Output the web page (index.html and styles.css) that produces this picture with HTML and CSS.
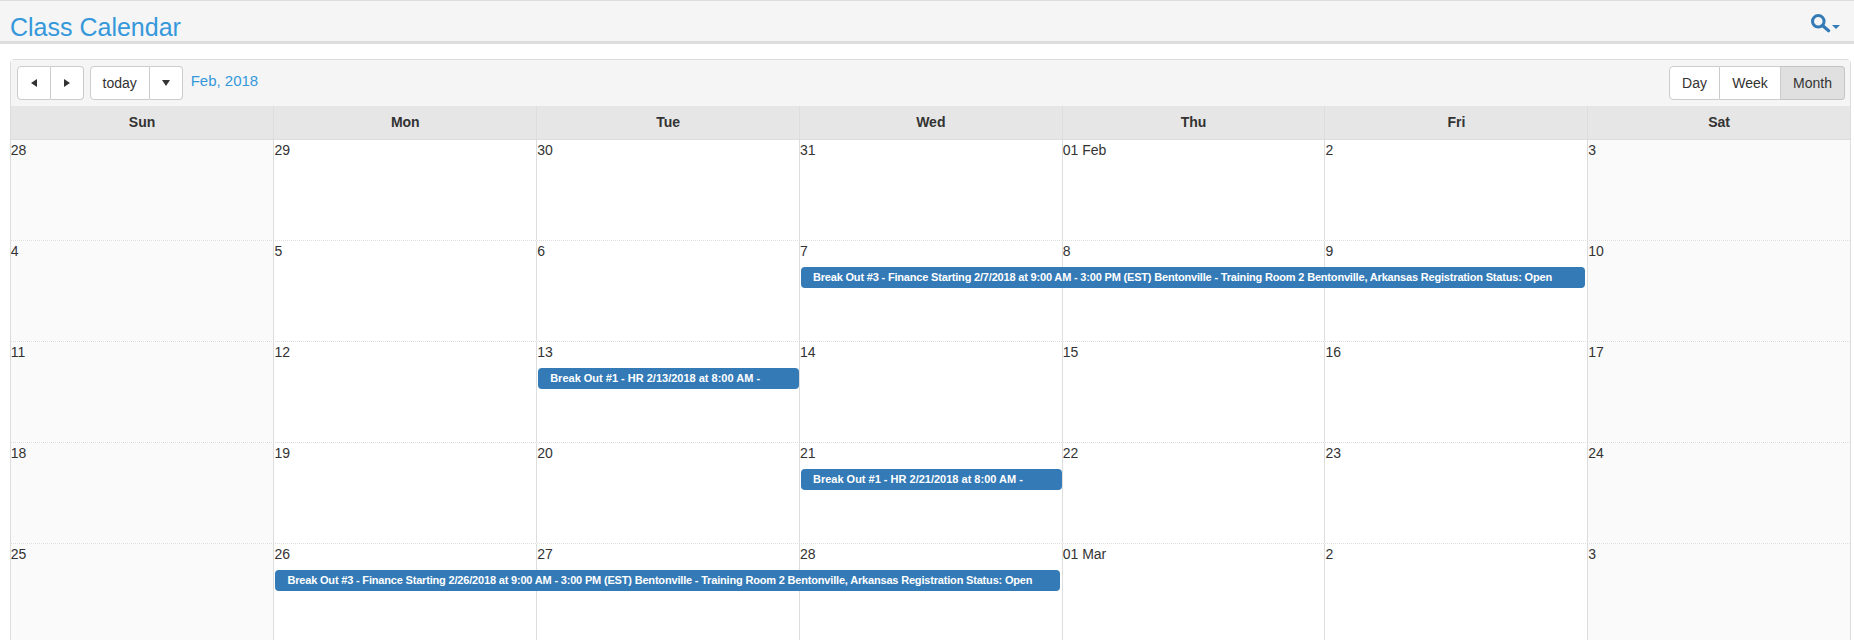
FILE: index.html
```html
<!DOCTYPE html>
<html lang="en">
<head>
    <meta charset="UTF-8">
    <title>Class Calendar</title>
    <link rel="stylesheet" href="styles.css">
</head>
<body>
    <header class="topbar">
        <h1 class="page-title">Class Calendar</h1>
        <button class="search-toggle" type="button" aria-label="Search">
            <svg width="20" height="20" viewBox="0 0 20 20"><circle cx="7.3" cy="7.3" r="5.8" fill="none" stroke="#337ab7" stroke-width="3"/><path d="M11.8 11.8 L17.6 16.8" stroke="#337ab7" stroke-width="3.2" stroke-linecap="round"/></svg>
            <span class="search-caret"></span>
        </button>
    </header>

    <section class="calendar">
        <div class="toolbar">
            <div class="btn-group">
                <button class="btn btn-arrow" type="button"><span class="tri tri-left"></span></button>
                <button class="btn btn-arrow" type="button"><span class="tri tri-right"></span></button>
            </div>
            <div class="btn-group">
                <button class="btn btn-today" type="button">today</button>
                <button class="btn btn-arrow" type="button"><span class="tri tri-down"></span></button>
            </div>
            <span class="month-label">Feb, 2018</span>
            <div class="btn-group views">
                <button class="btn btn-day" type="button">Day</button>
                <button class="btn btn-week" type="button">Week</button>
                <button class="btn btn-month active" type="button">Month</button>
            </div>
        </div>

        <div class="day-names">
            <div>Sun</div><div>Mon</div><div>Tue</div><div>Wed</div><div>Thu</div><div>Fri</div><div>Sat</div>
        </div>

        <div class="week first">
            <div class="day weekend">28</div><div class="day">29</div><div class="day">30</div><div class="day">31</div><div class="day">01 Feb</div><div class="day">2</div><div class="day weekend">3</div>
        </div>
        <div class="week">
            <div class="day weekend">4</div><div class="day">5</div><div class="day">6</div><div class="day">7</div><div class="day">8</div><div class="day">9</div><div class="day weekend">10</div>
            <a class="event long from-wed span-3">Break Out #3 - Finance Starting 2/7/2018 at 9:00 AM - 3:00 PM (EST) Bentonville - Training Room 2 Bentonville, Arkansas Registration Status: Open</a>
        </div>
        <div class="week">
            <div class="day weekend">11</div><div class="day">12</div><div class="day">13</div><div class="day">14</div><div class="day">15</div><div class="day">16</div><div class="day weekend">17</div>
            <a class="event from-tue span-1">Break Out #1 - HR 2/13/2018 at 8:00 AM -</a>
        </div>
        <div class="week">
            <div class="day weekend">18</div><div class="day">19</div><div class="day">20</div><div class="day">21</div><div class="day">22</div><div class="day">23</div><div class="day weekend">24</div>
            <a class="event from-wed span-1">Break Out #1 - HR 2/21/2018 at 8:00 AM -</a>
        </div>
        <div class="week">
            <div class="day weekend">25</div><div class="day">26</div><div class="day">27</div><div class="day">28</div><div class="day">01 Mar</div><div class="day">2</div><div class="day weekend">3</div>
            <a class="event long from-mon span-3">Break Out #3 - Finance Starting 2/26/2018 at 9:00 AM - 3:00 PM (EST) Bentonville - Training Room 2 Bentonville, Arkansas Registration Status: Open</a>
        </div>
    </section>
</body>
</html>
```

FILE: styles.css
```css
* {
    box-sizing: border-box;
    margin: 0;
    padding: 0;
}

html, body {
    height: 100vh;
    overflow: hidden;
}

body {
    background: #fff;
    color: #333;
    font-family: "Liberation Sans", Arial, sans-serif;
    font-size: 14px;
}

.topbar {
    height: 44px;
    display: flex;
    justify-content: space-between;
    background: #f5f5f5;
    border-top: 1px solid #ddd;
    border-bottom: 3px solid #ddd;
    padding: 0 14px 0 10px;
}

.page-title {
    font-size: 25px;
    font-weight: 400;
    line-height: 28px;
    margin-top: 12px;
    color: #3498db;
}

.search-toggle {
    display: flex;
    align-items: center;
    height: 20px;
    margin-top: 13px;
    background: none;
    border: none;
}

.search-caret {
    width: 0;
    height: 0;
    margin: 6px 0 0 1px;
    border-top: 4px solid #337ab7;
    border-left: 4px solid transparent;
    border-right: 4px solid transparent;
}

.calendar {
    margin: 15px 3px 0 9.65px;
    border: 1px solid #ddd;
    border-radius: 4px 4px 0 0;
}

.toolbar {
    height: 46px;
    display: flex;
    align-items: flex-start;
    gap: 6px;
    padding: 6px 5px 0 6px;
    background: #f5f5f5;
}

.btn-group {
    display: flex;
}

.btn {
    height: 34px;
    background: #fff;
    border: 1px solid #ccc;
    border-left-width: 0;
    color: #333;
    font-family: inherit;
    font-size: 14px;
    display: flex;
    align-items: center;
    justify-content: center;
}

.btn:first-child {
    border-left-width: 1px;
    border-radius: 4px 0 0 4px;
}

.btn:last-child {
    border-radius: 0 4px 4px 0;
}

.btn-arrow {
    width: 33px;
}

.btn:first-child.btn-arrow {
    width: 34px;
}

.btn-today {
    width: 60px;
}

.btn-day {
    width: 51px;
}

.btn-week {
    width: 61px;
}

.btn-month {
    width: 64px;
}

.btn.active {
    background: #e0e0e0;
    border-color: #c4c4c4;
}

.tri {
    width: 0;
    height: 0;
    border-style: solid;
    border-color: transparent;
}

.tri-left {
    border-width: 4px 6px 4px 0;
    border-right-color: #333;
}

.tri-right {
    border-width: 4px 0 4px 6px;
    border-left-color: #333;
}

.tri-down {
    border-width: 6px 4px 0 4px;
    border-top-color: #333;
}

.month-label {
    margin-left: 2px;
    font-size: 15px;
    line-height: 30px;
    color: #3498db;
}

.views {
    margin-left: auto;
}

.day-names {
    height: 34px;
    display: grid;
    grid-template-columns: repeat(7, minmax(0, 1fr));
    background: #e6e6e6;
    border-bottom: 1px solid #ddd;
    font-weight: 700;
    line-height: 33px;
    text-align: center;
}

.day-names div + div {
    border-left: 1px solid #ddd;
}

.week {
    height: 101px;
    display: grid;
    grid-template-columns: repeat(7, minmax(0, 1fr));
    grid-template-rows: 100%;
    border-top: 1px dotted #ddd;
}

.week.first {
    height: 100px;
    border-top: 0;
}

.day {
    grid-row: 1;
    line-height: 20px;
}

.day:nth-child(1) { grid-column: 1; }
.day:nth-child(2) { grid-column: 2; }
.day:nth-child(3) { grid-column: 3; }
.day:nth-child(4) { grid-column: 4; }
.day:nth-child(5) { grid-column: 5; }
.day:nth-child(6) { grid-column: 6; }
.day:nth-child(7) { grid-column: 7; }

.day + .day {
    border-left: 1px solid #ddd;
}

.weekend {
    background: #fafafa;
}

/* events sit in the same grid row as the days, over them */
.event {
    grid-row: 1;
    align-self: start;
    height: 21px;
    margin-top: 26px;
    margin-left: 2px;
    padding-left: 12px;
    background: #337ab7;
    border-radius: 4px;
    color: #fff;
    font-size: 11px;
    font-weight: 700;
    line-height: 20px;
    white-space: nowrap;
    overflow: hidden;
}

.event.long {
    letter-spacing: -0.18px;
}

.from-mon {
    grid-column-start: 2;
}

.from-tue {
    grid-column-start: 3;
}

.from-wed {
    grid-column-start: 4;
}

.span-1 {
    grid-column-end: span 1;
}

.span-3 {
    grid-column-end: span 3;
    margin-right: 2px;
}
```
